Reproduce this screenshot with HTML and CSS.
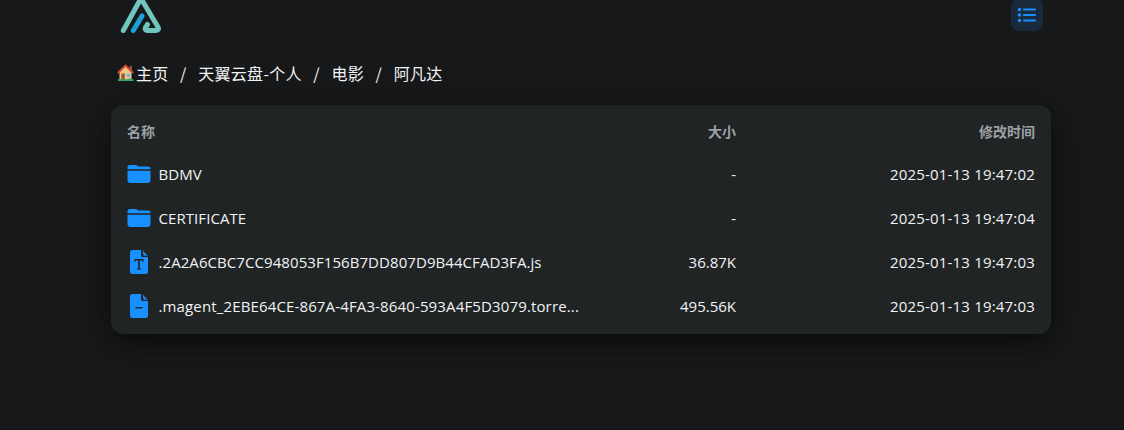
FILE: index.html
```
<!DOCTYPE html>
<html lang="zh-CN">
<head>
  <meta charset="UTF-8">
  <title>阿凡达</title>
  <meta name="viewport" content="width=device-width, initial-scale=1.0">
  <link rel="stylesheet" href="styles.css">
</head>
<body>
  <!-- 图标 -->
  <svg class="sprite">
    <symbol id="icon-folder" viewBox="0 0 24 20">
      <path d="M.5 5.2V3.5C.5 1.8 1.5 1 3 1h5c.9 0 1.500.3 2.200.8.600.500 1.100.7 1.900.7H21c1.600 0 2.500.9 2.500 2.300v.4z"/>
      <path d="M.5 6.700h23V16c0 2-1 3-3 3h-17c-2 0-3-1-3-3z"/>
    </symbol>
    <symbol id="icon-text" viewBox="0 0 18 24">
      <path fill-rule="evenodd" d="M2.500 0H11v5.500A1.500 1.500 0 0 0 12.500 7H18v14.500a2.500 2.500 0 0 1-2.500 2.500h-13A2.500 2.500 0 0 1 0 21.500v-19A2.500 2.500 0 0 1 2.500 0zM4.500 9v3h1v-1.500h2.700v8H6.700v1h4.600v-1H9.800v-8h2.700V12h1V9z"/>
      <path d="M12.300 0.300L17.700 5.700H13.800z"/>
    </symbol>
    <symbol id="icon-file" viewBox="0 0 18 24">
      <path fill-rule="evenodd" d="M2.500 0H11v5.500A1.500 1.500 0 0 0 12.500 7H18v14.500a2.500 2.500 0 0 1-2.500 2.500h-13A2.500 2.500 0 0 1 0 21.500v-19A2.500 2.500 0 0 1 2.500 0zM5.500 13v1.400h7V13z"/>
      <path d="M12.300 0.300L17.700 5.700H13.800z"/>
    </symbol>
  </svg>

  <div class="container">
    <header class="header">
      <svg class="logo" viewBox="0 0 42 38">
        <path class="logo-a" d="M3.300 34.500L19.500 5Q21 2.500 22.500 5L38 31Q39.500 34.500 36 34.500H27Q24.500 34.500 25.500 31.500L27.500 28.500"/>
        <path class="logo-b" d="M13.300 34.500L22 20"/>
      </svg>
      <button class="layout-btn" title="列表视图">
        <svg viewBox="0 0 20 16">
          <path d="M7 2.500h11M7 8h11M7 13.500h11"/>
          <circle cx="2.500" cy="2.500" r="1.700"/>
          <circle cx="2.500" cy="8" r="1.700"/>
          <circle cx="2.500" cy="13.500" r="1.700"/>
        </svg>
      </button>
    </header>

    <nav class="nav">
      <a>
        <svg class="home" viewBox="0 0 18 18">
          <path fill="#8a4b38" d="M12.500 2h2.500v5h-2.500z"/>
          <path fill="#f3c77f" d="M2.500 8L8.500 2l6 6v8h-12z"/>
          <path fill="#9b5444" d="M4.300 9.500h3.500V16H4.300z"/>
          <path fill="#6fb8e8" d="M9.500 9.500h3.500v3.500H9.500z"/>
          <path fill="none" stroke="#dc4638" stroke-width="1.800" stroke-linecap="round" d="M1.300 8.500L8.500 1.500l7.200 7"/>
          <path fill="#35a866" d="M1 15.300q2-1.300 3 0h6q3-1.500 6.500.2v1.500H1z"/>
        </svg>主页</a>
      <span class="sep">/</span>
      <a>天翼云盘-个人</a>
      <span class="sep">/</span>
      <a>电影</a>
      <span class="sep">/</span>
      <a>阿凡达</a>
    </nav>

    <main class="list">
      <div class="row title">
        <span class="name">名称</span>
        <span class="size">大小</span>
        <span class="time">修改时间</span>
      </div>
      <div class="row">
        <span class="name"><svg class="icon folder"><use href="#icon-folder"/></svg><span class="text">BDMV</span></span>
        <span class="size">-</span>
        <span class="time">2025-01-13 19:47:02</span>
      </div>
      <div class="row">
        <span class="name"><svg class="icon folder"><use href="#icon-folder"/></svg><span class="text">CERTIFICATE</span></span>
        <span class="size">-</span>
        <span class="time">2025-01-13 19:47:04</span>
      </div>
      <div class="row">
        <span class="name"><svg class="icon"><use href="#icon-text"/></svg><span class="text">.2A2A6CBC7CC948053F156B7DD807D9B44CFAD3FA.js</span></span>
        <span class="size">36.87K</span>
        <span class="time">2025-01-13 19:47:03</span>
      </div>
      <div class="row">
        <span class="name"><svg class="icon"><use href="#icon-file"/></svg><span class="text long">.magent_2EBE64CE-867A-4FA3-8640-593A4F5D3079.torre...</span></span>
        <span class="size">495.56K</span>
        <span class="time">2025-01-13 19:47:03</span>
      </div>
    </main>
  </div>
</body>
</html>
```
FILE: styles.css
```
* {
  box-sizing: border-box;
}
body {
  margin: 0;
  min-height: 100vh;
  background: #17181a;
  border-bottom: 1px solid #130e17;
  color: #f2f3f4;
  font-family: "Open Sans", "Noto Sans CJK SC", sans-serif;
  font-size: 15px;
}
.sprite {
  display: none;
}
.container {
  width: 940px;
  margin: 0 auto 0 111px;
}
.header {
  display: flex;
  justify-content: space-between;
  align-items: flex-start;
  height: 52px;
  padding: 0 8px;
}
.logo {
  width: 42px;
  height: 38px;
  margin: -4px 0 0 1px;
  fill: none;
  stroke-width: 5;
  stroke-linecap: round;
  stroke-linejoin: round;
}
.logo-a {
  stroke: #70c6be;
}
.logo-b {
  stroke: #1ba0d8;
}
.layout-btn {
  display: flex;
  align-items: center;
  justify-content: center;
  width: 32px;
  height: 32px;
  margin-top: -1px;
  padding: 0;
  border: none;
  border-radius: 8px;
  background: #182a3b;
}
.layout-btn svg {
  width: 20px;
  height: 16px;
  fill: #1890ff;
  stroke: #1890ff;
  stroke-width: 2.2;
  stroke-linecap: round;
}
.layout-btn circle {
  stroke: none;
}
.nav {
  display: flex;
  align-items: center;
  height: 41px;
  padding-left: 6px;
  font-family: "Noto Sans CJK SC", sans-serif;
  font-size: 16px;
  letter-spacing: .3px;
}
.nav a {
  display: flex;
  align-items: center;
}
.sep {
  width: 29.6px;
  text-align: center;
}
.home {
  width: 18px;
  height: 18px;
  margin-right: 1px;
}
.list {
  margin-top: 12px;
  height: 229px;
  padding: 8px;
  border-radius: 12px;
  background: #202425;
  box-shadow: 0 10px 15px -3px rgba(0, 0, 0, .3), 0 8px 40px rgba(0, 0, 0, .35);
}
.row {
  display: flex;
  align-items: center;
  height: 44px;
  padding: 0 8px;
}
.title {
  height: 39px;
  padding-bottom: 3px;
  color: #9ba1a6;
  font-family: "Noto Sans CJK SC", sans-serif;
  font-size: 14px;
  font-weight: 700;
}
.name {
  display: flex;
  align-items: center;
  width: 454px;
}
.icon {
  flex: none;
  width: 24px;
  height: 24px;
  margin-right: 7.5px;
  fill: #1890ff;
}
.folder {
  height: 20px;
}
.text {
  overflow: hidden;
  white-space: nowrap;
  text-overflow: ellipsis;
  letter-spacing: .07px;
}
.long {
  letter-spacing: .14px;
}
.size {
  width: 155px;
  text-align: right;
}
.time {
  flex: 1;
  text-align: right;
}
.row:not(.title) .time {
  letter-spacing: .18px;
}
```
